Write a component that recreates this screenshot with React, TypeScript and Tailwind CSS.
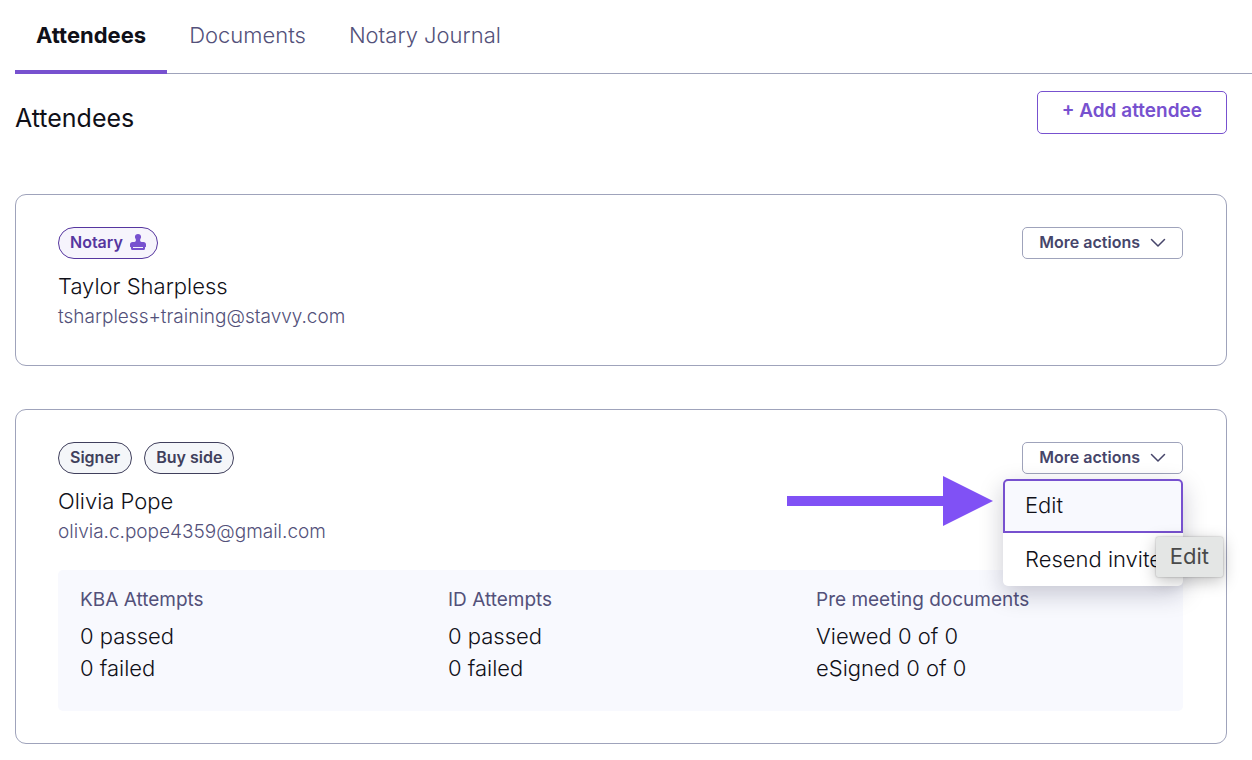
import React from "react";

function Chevron() {
  return (
    <svg width="16" height="16" viewBox="0 0 16 16" fill="none" stroke="currentColor" strokeWidth="1.5" strokeLinecap="round" strokeLinejoin="round" aria-hidden="true">
      <path d="M1.500 5.500 L8 12 L14.500 5.500" />
    </svg>
  );
}

function StampIcon() {
  return (
    <svg width="16" height="16" viewBox="0 0 16 16" fill="#7751cf" aria-hidden="true">
      <path d="M8 0C6.200 0 4.900 1.300 4.900 2.900C4.900 4.100 5.900 4.700 5.900 6C5.900 7.300 5.400 8 4.300 8H2.500C1 8 0 9 0 10.500V12.500C0 13 .4 13.300 1 13.300V14.500C1 15.400 1.500 16 2.400 16H13.600C14.500 16 15 15.400 15 14.500V13.300C15.600 13.300 16 13 16 12.500V10.500C16 9 15 8 13.500 8H11.700C10.600 8 10.100 7.300 10.100 6C10.100 4.700 11.100 4.100 11.100 2.900C11.100 1.300 9.800 0 8 0ZM3 13H13V14H3Z" fillRule="evenodd" />
    </svg>
  );
}

function Badge({ children }: { children: React.ReactNode }) {
  return (
    <span className="flex h-8 items-center rounded-full border border-[#403f5c] bg-[#f4f6f9] px-[11px] pb-[2px] text-base font-semibold text-[#403f5c]">
      {children}
    </span>
  );
}

function MoreActions({ expanded = false }: { expanded?: boolean }) {
  return (
    <button type="button" aria-haspopup="menu" aria-expanded={expanded} className="flex h-8 items-center gap-[10px] rounded-[5px] border border-[#9fa3bb] bg-white px-4 pb-[2px] text-base font-semibold text-[#46456a]">
      More actions
      <Chevron />
    </button>
  );
}

function Person({ name, email }: { name: string; email: string }) {
  return (
    <div className="mt-[11px]">
      <h2 className="text-[22px] leading-8 font-[350]">{name}</h2>
      <p className="text-[19px] leading-[30px] font-[350] text-[#53517a]">{email}</p>
    </div>
  );
}

const stats = [
  { title: "KBA Attempts", lines: ["0 passed", "0 failed"] },
  { title: "ID Attempts", lines: ["0 passed", "0 failed"] },
  { title: "Pre meeting documents", lines: ["Viewed 0 of 0", "eSigned 0 of 0"] },
];

export default function App() {
  return (
    <main className="bg-white pb-4 pl-[15px] font-['Inter','Liberation_Sans',sans-serif] text-[#101018]">
      <nav className="flex border-b border-[#9fa3bb] text-[22px] leading-8 font-[350] text-[#53517a]">
        <a href="#attendees" aria-current="page" className="-mb-px border-b-4 border-[#7751cf] px-[21px] py-[19px] font-bold text-[#101018]">Attendees</a>
        <a href="#documents" className="px-[22px] py-[19px]">Documents</a>
        <a href="#journal" className="px-[21px] py-[19px]">Notary Journal</a>
      </nav>

      <div className="pr-[25px]">
        <header className="flex items-start justify-between pt-[17px]">
          <h1 className="mt-[11px] text-[25px] leading-8">Attendees</h1>
          <button type="button" className="h-[43px] rounded-[5px] border border-[#7751cf] bg-white px-6 pb-[2px] text-[19px] font-semibold text-[#7751cf]">+ Add attendee</button>
        </header>

        <section className="mt-[60px] rounded-[11px] border border-[#9fa3bb] pt-8 pr-[43px] pb-[33px] pl-[42px]">
          <div className="flex items-start justify-between">
            <span className="flex h-8 items-center gap-[7px] rounded-full border border-[#56369f] bg-[#f6f4fc] px-[11px] pb-[2px] text-base font-semibold text-[#56369f]">
              Notary
              <StampIcon />
            </span>
            <MoreActions />
          </div>
          <Person name="Taylor Sharpless" email="tsharpless+training@stavvy.com" />
        </section>

        <section className="mt-[43px] rounded-[11px] border border-[#9fa3bb] py-8 pr-[43px] pl-[42px]">
          <div className="flex items-start justify-between">
            <div className="flex gap-3">
              <Badge>Signer</Badge>
              <Badge>Buy side</Badge>
            </div>
            <div className="relative">
              <MoreActions expanded />
              <div role="menu" className="absolute top-full right-0 z-10 mt-[5px] w-[180px] rounded-[5px] bg-white text-[22px] leading-8 font-[350] shadow-[0_8px_24px_rgba(20,20,50,0.22)]">
                <button type="button" role="menuitem" className="block h-[54px] w-full rounded-t-[5px] border-2 border-[#7751cf] bg-[#f8f9fe] px-5 pb-[2px] text-left">Edit</button>
                <button type="button" role="menuitem" className="block h-[53px] w-full px-[22px] pb-[2px] text-left whitespace-nowrap">Resend invite</button>
                <span role="tooltip" className="absolute top-[58px] -right-10 flex h-10 items-center rounded-[2px] bg-[#e4e6e5] px-[14px] pb-[2px] font-normal text-[#494a4a] shadow-[0_4px_16px_rgba(0,0,0,0.25),0_0_2px_rgba(0,0,0,0.35)]">Edit</span>
                <svg className="absolute -top-[3px] right-full mr-[10px]" width="206" height="50" viewBox="0 0 206 50" fill="#8051f5" aria-hidden="true">
                  <path d="M0 20H156V0L206 25L156 50V30H0Z" />
                </svg>
              </div>
            </div>
          </div>
          <Person name="Olivia Pope" email="olivia.c.pope4359@gmail.com" />
          <div className="mt-[23px] grid grid-cols-3 gap-[23px] rounded-[5px] bg-[#f8f9fe] px-[22px] pt-[15px] pb-[27px]">
            {stats.map((s) => (
              <div key={s.title}>
                <h3 className="mb-[6px] text-[19px] leading-[29px] font-normal text-[#53517a]">{s.title}</h3>
                {s.lines.map((l) => (
                  <p key={l} className="text-[22px] leading-8 font-[350]">{l}</p>
                ))}
              </div>
            ))}
          </div>
        </section>
      </div>
    </main>
  );
}
